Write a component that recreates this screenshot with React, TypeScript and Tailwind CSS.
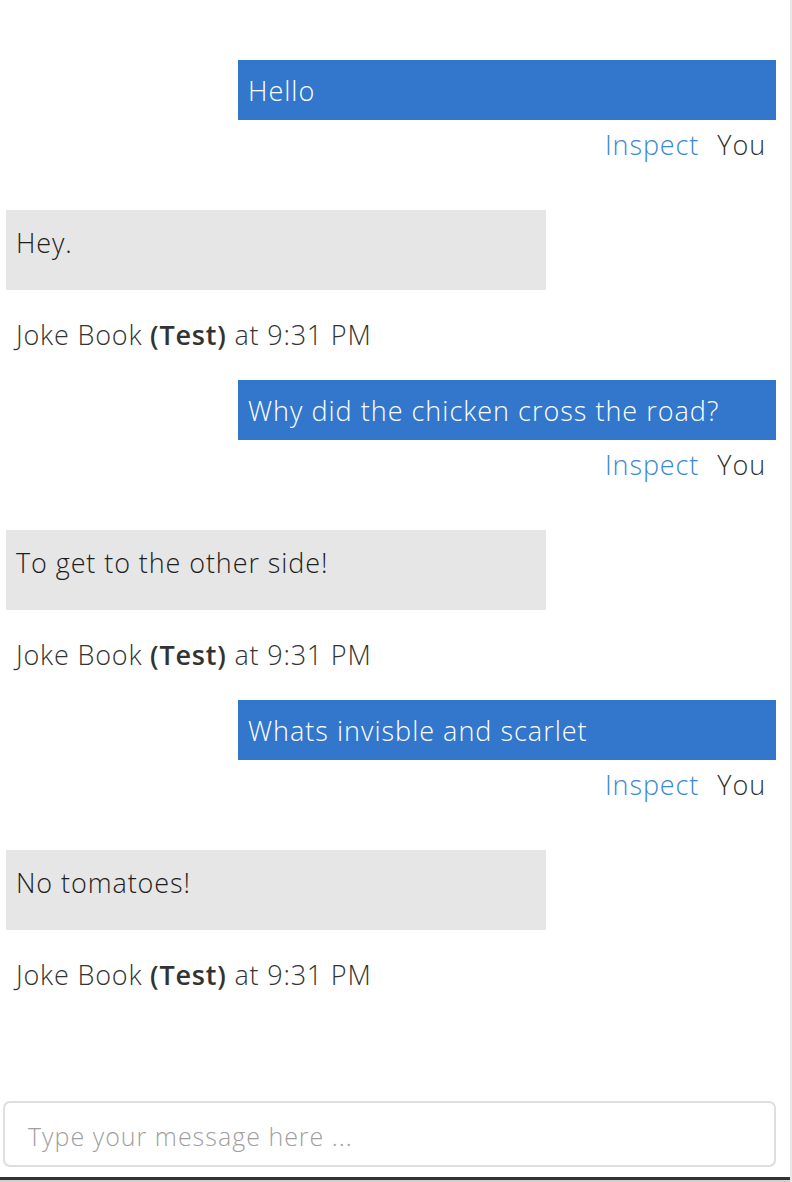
import React from 'react';

type Message =
  | { id: number; from: 'user'; text: string }
  | { id: number; from: 'bot'; text: string; time: string };

const messages: Message[] = [
  { id: 1, from: 'user', text: 'Hello' },
  { id: 2, from: 'bot', text: 'Hey.', time: '9:31 PM' },
  { id: 3, from: 'user', text: 'Why did the chicken cross the road?' },
  { id: 4, from: 'bot', text: 'To get to the other side!', time: '9:31 PM' },
  { id: 5, from: 'user', text: 'Whats invisble and scarlet' },
  { id: 6, from: 'bot', text: 'No tomatoes!', time: '9:31 PM' },
];

const font = { fontFamily: '"Open Sans", "Noto Sans", sans-serif' };

function UserMessage({ text }: { text: string }) {
  return (
    <div className="flex flex-col items-end pr-[14px]">
      <div className="w-[538px] h-[60px] bg-[#3277cc] text-white px-[10px] flex items-center">
        <span className="text-[27px] leading-none tracking-[1px]">{text}</span>
      </div>
      <div className="h-[50px] flex items-center gap-[18px] pr-[10px] text-[27px] tracking-[0.9px]">
        <span className="text-[#3a87d6]">Inspect</span>
        <span className="text-[#333]">You</span>
      </div>
    </div>
  );
}

function BotMessage({ text, time }: { text: string; time: string }) {
  return (
    <div className="flex flex-col items-start pl-[6px]">
      <div className="w-[540px] h-[80px] bg-[#e6e6e6] text-[#1e1e1e] px-[10px] pt-[19px]">
        <span className="text-[27px] leading-[27px] tracking-[0.9px]">{text}</span>
      </div>
      <div className="h-[90px] flex items-center pl-[10px] text-[27px] tracking-[0.8px] text-[#333]">
        <span>
          Joke Book <b className="font-semibold">(Test)</b> at {time}
        </span>
      </div>
    </div>
  );
}

export default function App() {
  return (
    <div
      className="w-[792px] h-[1182px] bg-white flex flex-col border-r-2 border-[#e8e8e8] overflow-hidden font-light"
      style={font}
    >
      {/* 会話ログ */}
      <div className="flex-1 pt-[60px] flex flex-col">
        {messages.map((m) =>
          m.from === 'user' ? (
            <div key={m.id} className="mb-[40px]">
              <UserMessage text={m.text} />
            </div>
          ) : (
            <BotMessage key={m.id} text={m.text} time={m.time} />
          )
        )}
      </div>

      {/* 入力欄 */}
      <div className="pl-[3px] pr-[14px] pb-[10px]">
        <div className="h-[66px] rounded-[7px] border-2 border-[#dedede] flex items-center px-[23px] pt-[5px]">
          <span className="text-[25px] tracking-[1px] text-[#a0a0a0]">Type your message here ...</span>
        </div>
      </div>
      <div className="h-[3px] bg-[#333]" />
      <div className="h-[2px] bg-[#cfcfcf]" />
    </div>
  );
}
